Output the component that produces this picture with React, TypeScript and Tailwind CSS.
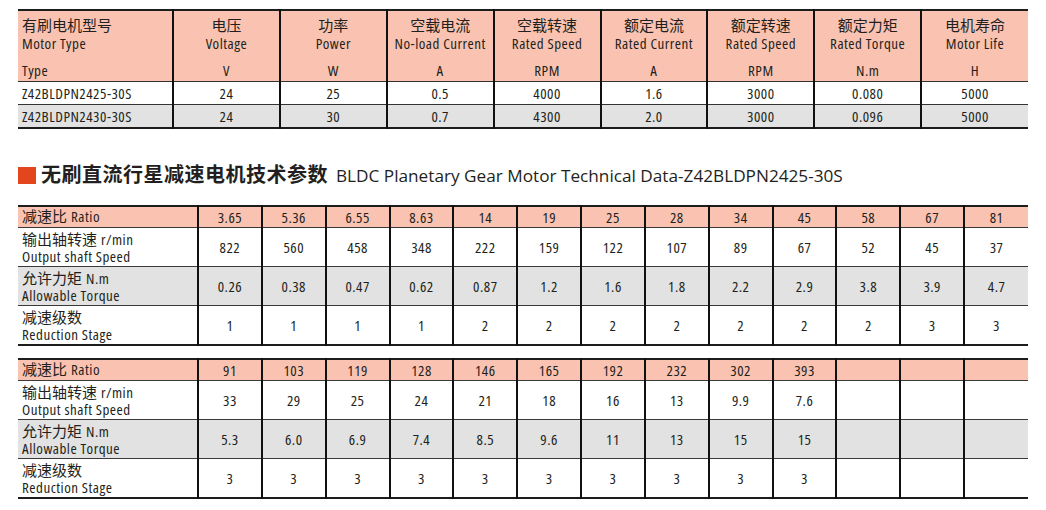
const motorCols = [
  { zh: '有刷电机型号', en: 'Motor Type', unit: 'Type' },
  { zh: '电压', en: 'Voltage', unit: 'V' },
  { zh: '功率', en: 'Power', unit: 'W' },
  { zh: '空载电流', en: 'No-load Current', unit: 'A' },
  { zh: '空载转速', en: 'Rated Speed', unit: 'RPM' },
  { zh: '额定电流', en: 'Rated Current', unit: 'A' },
  { zh: '额定转速', en: 'Rated Speed', unit: 'RPM' },
  { zh: '额定力矩', en: 'Rated Torque', unit: 'N.m' },
  { zh: '电机寿命', en: 'Motor Life', unit: 'H' },
]

const motorRows = [
  ['Z42BLDPN2425-30S', '24', '25', '0.5', '4000', '1.6', '3000', '0.080', '5000'],
  ['Z42BLDPN2430-30S', '24', '30', '0.7', '4300', '2.0', '3000', '0.096', '5000'],
]

type GearData = { ratio: string[]; speed: string[]; torque: string[]; stage: string[] }

const gearA: GearData = {
  ratio: ['3.65', '5.36', '6.55', '8.63', '14', '19', '25', '28', '34', '45', '58', '67', '81'],
  speed: ['822', '560', '458', '348', '222', '159', '122', '107', '89', '67', '52', '45', '37'],
  torque: ['0.26', '0.38', '0.47', '0.62', '0.87', '1.2', '1.6', '1.8', '2.2', '2.9', '3.8', '3.9', '4.7'],
  stage: ['1', '1', '1', '1', '2', '2', '2', '2', '2', '2', '2', '3', '3'],
}

const pad = (xs: string[]) => [...xs, ...Array(13 - xs.length).fill('')]

const gearB: GearData = {
  ratio: pad(['91', '103', '119', '128', '146', '165', '192', '232', '302', '393']),
  speed: pad(['33', '29', '25', '24', '21', '18', '16', '13', '9.9', '7.6']),
  torque: pad(['5.3', '6.0', '6.9', '7.4', '8.5', '9.6', '11', '13', '15', '15']),
  stage: pad(['3', '3', '3', '3', '3', '3', '3', '3', '3', '3']),
}

function MotorTable() {
  return (
    <table className="w-[1010px] table-fixed border-collapse border-y-2 border-[#1d1d1d]">
      <colgroup>
        <col className="w-[155px]" />
        {motorCols.slice(1).map((_, i) => (
          <col key={i} />
        ))}
      </colgroup>
      <thead>
        <tr className="border-b border-[#333]">
          {motorCols.map((c, i) => (
            <th
              key={i}
              className={`h-[70px] bg-[#fac3b1] p-0 align-top font-medium ${
                i === 0 ? 'pl-1 text-left' : 'border-l-2 border-[#111] text-center'
              }`}
            >
              <div className="flex h-[70px] flex-col pt-[5px]">
                <span className="h-[18px] font-normal leading-[18px] tracking-normal">{c.zh}</span>
                <span className="h-[18px] whitespace-nowrap leading-[18px]">{c.en}</span>
                <span className="mt-auto pb-[2px] leading-[18px]">{c.unit}</span>
              </div>
            </th>
          ))}
        </tr>
      </thead>
      <tbody>
        {motorRows.map((r, ri) => (
          <tr key={ri} className={ri === 0 ? 'border-b border-[#333] bg-white' : 'bg-[#e1e2e1]'}>
            {r.map((v, i) => (
              <td
                key={i}
                className={`h-[23px] p-0 leading-[18px] ${
                  i === 0 ? 'pl-1 text-left' : 'border-l-2 border-[#111] text-center'
                }`}
              >
                {v}
              </td>
            ))}
          </tr>
        ))}
      </tbody>
    </table>
  )
}

function GearTable({ data }: { data: GearData }) {
  const rows = [
    { key: 'ratio', zh: '减速比', tail: 'Ratio', en: '', values: data.ratio, bg: 'bg-[#fac3b1]', h: 'h-[22px]' },
    { key: 'speed', zh: '输出轴转速', tail: 'r/min', en: 'Output shaft Speed', values: data.speed, bg: 'bg-white', h: 'h-[39px]' },
    { key: 'torque', zh: '允许力矩', tail: 'N.m', en: 'Allowable Torque', values: data.torque, bg: 'bg-[#e1e2e1]', h: 'h-[39px]' },
    { key: 'stage', zh: '减速级数', tail: '', en: 'Reduction Stage', values: data.stage, bg: 'bg-white', h: 'h-[39px]' },
  ]
  return (
    <table className="w-[1010px] table-fixed border-collapse border-y-2 border-[#1d1d1d]">
      <colgroup>
        <col className="w-[180px]" />
        {data.ratio.map((_, i) => (
          <col key={i} />
        ))}
      </colgroup>
      <tbody>
        {rows.map((r, ri) => (
          <tr key={r.key} className={`${r.bg} ${ri < rows.length - 1 ? 'border-b border-[#3a3a3a]' : ''}`}>
            <td className={`${r.h} p-0 pl-1 text-left leading-[17px]`}>
              <div className={r.en ? 'pt-[2px]' : ''}>
                <span className="font-normal tracking-normal">{r.zh}</span>
                {r.tail && <span className="ml-1">{r.tail}</span>}
              </div>
              {r.en && <div>{r.en}</div>}
            </td>
            {r.values.map((v, i) => (
              <td key={i} className={`${r.h} border-l-2 border-[#111] p-0 text-center leading-[18px]`}>
                {v}
              </td>
            ))}
          </tr>
        ))}
      </tbody>
    </table>
  )
}

export default function App() {
  // Open Sans Condensed stands in for the sheet's condensed grotesque
  return (
    <div className="h-[510px] w-[1046px] overflow-hidden bg-white pl-[18px] pt-[9px] font-['Open_Sans','Noto_Sans_CJK_SC',sans-serif] text-[15px] font-medium tracking-[0.5px] text-[#231f20] [font-stretch:75%]">
      <MotorTable />
      <div className="mt-[38px] flex h-[17px] items-center">
        <div className="h-[17px] w-[18px] bg-[#e3461c]" />
        <h2 className="ml-[5px] whitespace-nowrap leading-[24px] tracking-normal">
          <span className="font-bold font-['Noto_Sans_CJK_SC',sans-serif] text-[20px] tracking-[0.5px]">
            无刷直流行星减速电机技术参数
          </span>
          <span className="ml-[8px] text-[17.2px] font-normal [font-stretch:88%]">
            BLDC Planetary Gear Motor Technical Data-Z42BLDPN2425-30S
          </span>
        </h2>
      </div>
      <div className="mt-[21px]">
        <GearTable data={gearA} />
      </div>
      <div className="mt-[12px]">
        <GearTable data={gearB} />
      </div>
    </div>
  )
}
